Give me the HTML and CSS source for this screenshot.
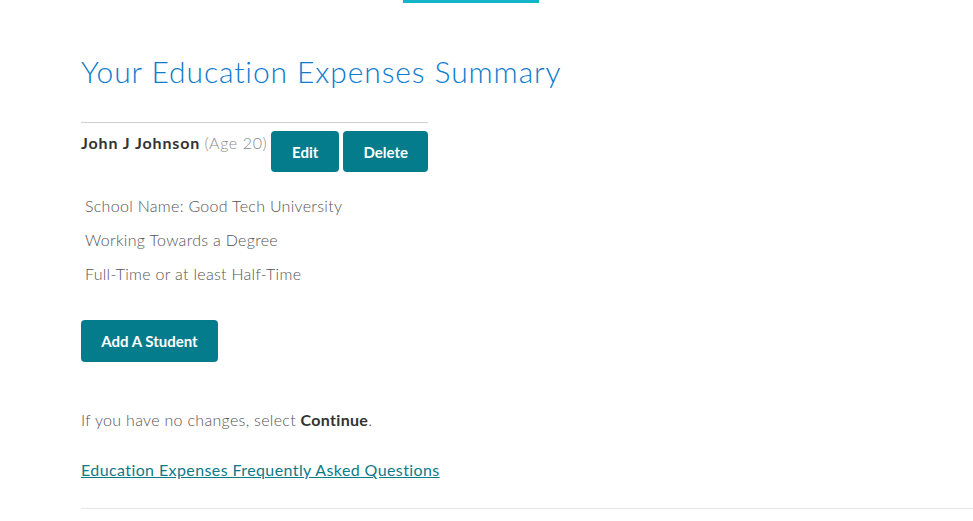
FILE: index.html
```html
<!DOCTYPE html>
<html>
<head>
<meta charset="utf-8">
<link rel="stylesheet" href="styles.css">
</head>
<body>
<div class="tabbar"><span class="tab-active"></span></div>
<main class="page">
  <h1 class="title">Your Education Expenses Summary</h1>
  <section class="student">
    <div class="student-head">
      <div class="student-name"><strong>John J Johnson</strong> <span class="age">(Age 20)</span></div>
      <button class="btn btn-edit">Edit</button>
      <button class="btn btn-delete">Delete</button>
    </div>
    <ul class="details">
      <li>School Name: Good Tech University</li>
      <li>Working Towards a Degree</li>
      <li>Full-Time or at least Half-Time</li>
    </ul>
  </section>
  <button class="btn btn-add">Add A Student</button>
  <p class="note">If you have no changes, select <strong>Continue</strong>.</p>
  <p class="faq"><a href="#">Education Expenses Frequently Asked Questions</a></p>
  <hr class="bottom-rule">
</main>
</body>
</html>
```

FILE: styles.css
```css
html, body {
  margin: 0;
  padding: 0;
  background: #fff;
}
body {
  font-family: Lato, "Open Sans", sans-serif;
  color: #4a4a4a;
}
.tabbar {
  height: 3px;
  display: flex;
}
.tab-active {
  display: block;
  margin-left: 403px;
  width: 136px;
  height: 3px;
  background: #13b4c8;
}
.page {
  padding-left: 81px;
}
.title {
  margin: 50px 0 0 0;
  font-size: 30px;
  line-height: 36px;
  font-weight: 300;
  color: #0d7bce;
  letter-spacing: 0.9px;
}
.student {
  margin-top: 33px;
  width: 347px;
  border-top: 1px solid #cfcfcf;
}
.student-head {
  display: flex;
  align-items: flex-start;
  gap: 4px;
  padding-top: 8px;
}
.student-name {
  flex-shrink: 0;
  white-space: nowrap;
  padding-top: 2px;
  font-size: 16px;
  line-height: 20px;
  color: #333;
}
.student-name strong {
  font-weight: 700;
  letter-spacing: 0.9px;
}
.age {
  color: #888;
  font-weight: 300;
  letter-spacing: 0.6px;
}
.btn {
  flex-shrink: 0;
  border: 0;
  border-radius: 4px;
  background: #057c8b;
  color: #fff;
  font-family: Lato, "Open Sans", sans-serif;
  font-size: 15px;
  font-weight: 700;
  height: 41px;
  padding: 0;
  cursor: pointer;
}
.btn-edit { width: 68px; }
.btn-delete { width: 85px; }
.details {
  list-style: none;
  margin: 24px 0 0 4px;
  padding: 0;
  font-size: 16px;
  font-weight: 300;
  letter-spacing: 0.3px;
  color: #555;
}
.details li {
  white-space: nowrap;
  line-height: 20px;
  margin-bottom: 14px;
}
.btn-add {
  display: block;
  margin-top: 36px;
  width: 137px;
  height: 42px;
}
.note {
  margin: 48px 0 0 0;
  font-size: 16px;
  line-height: 20px;
  font-weight: 300;
  letter-spacing: 0.3px;
  color: #555;
}
.note strong {
  font-weight: 700;
  color: #333;
}
.faq {
  margin: 30px 0 0 0;
  font-size: 16px;
  line-height: 20px;
  letter-spacing: 0.4px;
}
.faq a {
  color: #0c7b88;
  text-decoration: underline;
}
.bottom-rule {
  margin: 28px 0 0 0;
  border: 0;
  border-top: 1px solid #e6e6e6;
}
```
